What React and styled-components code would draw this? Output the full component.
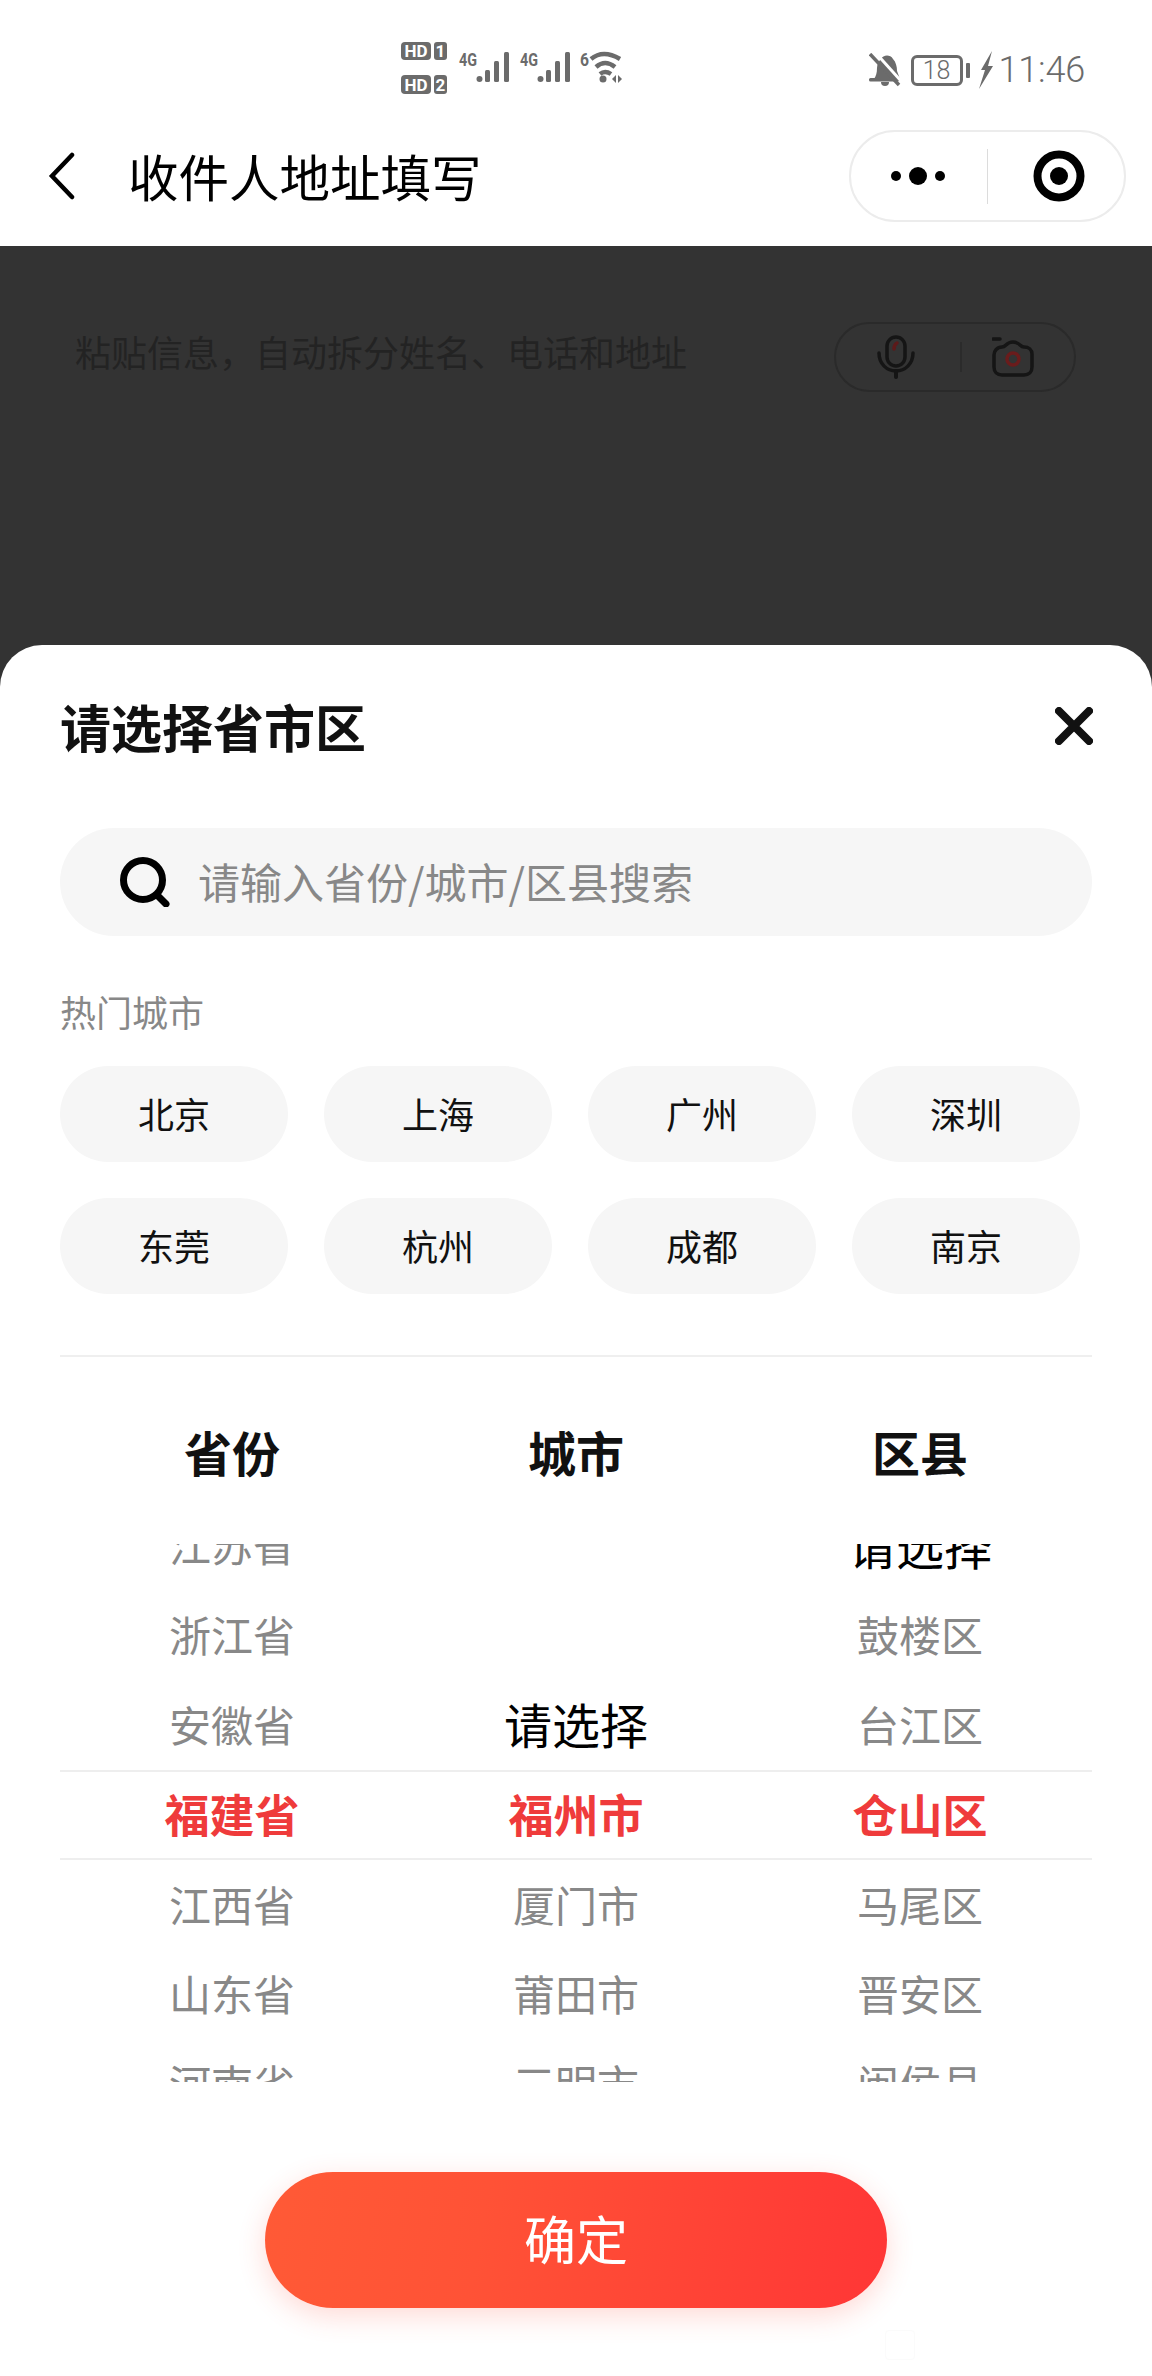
import React from "react";
import styled, { createGlobalStyle } from "styled-components";

const GlobalStyle = createGlobalStyle`
  html, body { margin: 0; padding: 0; background: #fff; }
  body { font-family: "Noto Sans CJK SC", "Liberation Sans", sans-serif; }
  * { box-sizing: border-box; }
`;

const Screen = styled.div`
  width: 1152px;
  height: 2376px;
  display: flex;
  flex-direction: column;
  overflow: hidden;
  background: #fff;
`;

/* status bar */
const StatusBar = styled.div`
  height: 106px;
  flex: none;
  display: flex;
  justify-content: space-between;
  align-items: flex-start;
  padding: 40px 67px 0 400px;
  color: #6b6b6b;
`;
const StatusRight = styled.div`
  display: flex;
  align-items: center;
  height: 40px;
  margin-top: 10px;
`;
const Battery = styled.div`
  width: 52px;
  height: 31px;
  margin-left: 10px;
  border: 3px solid #6b6b6b;
  border-radius: 6px;
  display: flex;
  align-items: center;
  justify-content: center;
  font: 300 25px/1 Roboto, sans-serif;
`;
const BatteryTip = styled.div`
  width: 4px;
  height: 15px;
  margin-left: 3px;
  background: #6b6b6b;
  border-radius: 1px;
`;
const Clock = styled.div`
  margin-left: 6px;
  font: 300 36px/1 Roboto, sans-serif;
  letter-spacing: -0.2px;
`;

/* navigation bar */
const NavBar = styled.div`
  height: 140px;
  flex: none;
  display: flex;
  align-items: center;
  padding: 0 26px 0 48px;
`;
const NavTitle = styled.div`
  margin-left: 53px;
  padding-bottom: 2px;
  font-size: 50.5px;
  line-height: 60px;
  color: #000;
`;
const Capsule = styled.div`
  margin-left: auto;
  width: 277px;
  height: 92px;
  border: 2px solid #ececec;
  border-radius: 46px;
  display: flex;
  align-items: center;
`;
const MoreCell = styled.div`
  width: 136px;
  display: flex;
  justify-content: center;
`;
const TargetCell = styled.div`
  flex: 1;
  display: flex;
  justify-content: center;
  padding-left: 6px;
`;
const CapsuleRule = styled.div`
  width: 1px;
  height: 55px;
  background: #dcdcdc;
`;

/* dimmed form behind the sheet */
const DimmedForm = styled.div`
  height: 399px;
  flex: none;
  background: #333;
  display: flex;
  justify-content: space-between;
  align-items: flex-start;
  padding: 76px 76px 0 75px;
`;
const PasteHint = styled.div`
  margin-top: 5px;
  font-size: 36px;
  line-height: 48px;
  color: #232323;
`;
const VoiceCapsule = styled.div`
  width: 242px;
  height: 70px;
  border: 2px solid #2a2a2a;
  border-radius: 35px;
  display: flex;
  align-items: center;
  padding-left: 41px;
`;
const VoiceRule = styled.div`
  width: 2px;
  height: 30px;
  margin: 0 30px 0 45px;
  background: #2b2b2b;
`;

/* bottom sheet, with the dimmed colour showing past its rounded corners */
const SheetBackdrop = styled.div`
  flex: 1;
  background: #333;
`;
const Sheet = styled.div`
  position: relative;
  height: 100%;
  background: #fff;
  border-radius: 42px 42px 0 0;
  padding: 0 60px;
`;
const SheetHeader = styled.div`
  height: 166px;
  padding-bottom: 4px;
  display: flex;
  align-items: center;
  justify-content: space-between;
`;
const SheetTitle = styled.div`
  font-size: 51px;
  font-weight: 700;
  line-height: 60px;
  color: #111;
`;
const CloseSlot = styled.div`
  display: flex;
  margin-right: -1px;
`;
const SearchBox = styled.div`
  margin-top: 17px;
  height: 108px;
  border-radius: 54px;
  background: #f6f6f6;
  display: flex;
  align-items: center;
  padding-left: 60px;
`;
const SearchHint = styled.div`
  margin-left: 28px;
  padding-bottom: 3px;
  font-size: 42px;
  line-height: 56px;
  color: #888;
`;
const HotLabel = styled.div`
  margin-top: 50px;
  font-size: 36px;
  line-height: 50px;
  color: #888;
`;
const HotGrid = styled.div`
  margin-top: 30px;
  display: grid;
  grid-template-columns: repeat(4, 228px);
  gap: 36px;
`;
const HotChip = styled.div`
  height: 96px;
  padding-bottom: 3px;
  border-radius: 48px;
  background: #f6f6f6;
  display: flex;
  align-items: center;
  justify-content: center;
  font-size: 36px;
  color: #111;
`;
const Divider = styled.div`
  margin-top: 61px;
  height: 2px;
  background: #efefef;
`;
const ColumnHeads = styled.div`
  margin-top: 64px;
  display: grid;
  grid-template-columns: repeat(3, 1fr);
`;
const ColumnHead = styled.div`
  text-align: center;
  font-size: 48px;
  font-weight: 700;
  line-height: 60px;
  color: #111;
`;
const Picker = styled.div`
  position: relative;
  margin-top: 63px;
  height: 538px;
  overflow: hidden;
  display: grid;
  grid-template-columns: repeat(3, 1fr);
`;
const PickerBand = styled.div`
  position: absolute;
  left: 0;
  right: 0;
  top: 226px;
  height: 90px;
  border-top: 2px solid #eee;
  border-bottom: 2px solid #eee;
`;
const PickerColumn = styled.div`
  margin-top: -43px;
`;
const PickerRow = styled.div`
  height: 89.8px;
  padding-bottom: 4px;
  display: flex;
  align-items: center;
  justify-content: center;
  font-size: ${(p) => (p.$tone === "muted" ? 42 : p.$tone === "active" ? 45 : 48)}px;
  font-weight: ${(p) => (p.$tone === "active" ? 700 : 400)};
  color: ${(p) => (p.$tone === "muted" ? "#888" : p.$tone === "active" ? "#ef3b3b" : "#000")};
`;
const ConfirmButton = styled.div`
  margin: 90px auto 0;
  width: 622px;
  height: 136px;
  padding-bottom: 6px;
  border-radius: 68px;
  background: linear-gradient(100deg, #ff5a36 0%, #ff5236 35%, #ff3636 100%);
  box-shadow: 0 8px 28px rgba(255, 70, 50, 0.2);
  display: flex;
  align-items: center;
  justify-content: center;
  font-size: 52px;
  color: #fff;
`;
const HomeGhost = styled.div`
  position: absolute;
  left: 885px;
  bottom: 16px;
  width: 30px;
  height: 30px;
  border: 1px solid #fbfbfb;
  border-radius: 4px;
`;

/* drawn icons */
const StatusGlyphs = () => (
  <svg width="226" height="56" viewBox="400 40 226 56" fill="#6b6b6b">
    <rect x="401" y="42" width="30" height="18" rx="4" />
    <rect x="434" y="42" width="13" height="18" rx="3" />
    <rect x="401" y="75" width="30" height="19" rx="4" />
    <rect x="434" y="75" width="13" height="19" rx="3" />
    <g fill="#fff" fontFamily="Roboto, sans-serif" fontWeight="700" fontSize="17" textAnchor="middle">
      <text x="416" y="57">HD</text>
      <text x="440.5" y="57">1</text>
      <text x="416" y="90.5">HD</text>
      <text x="440.5" y="90.5">2</text>
    </g>
    <g fontFamily="Roboto, sans-serif" fontWeight="700" fontSize="19">
      <text x="459" y="66" textLength="18" lengthAdjust="spacingAndGlyphs">4G</text>
      <text x="520" y="66" textLength="18" lengthAdjust="spacingAndGlyphs">4G</text>
      <text x="580" y="66" textLength="9" lengthAdjust="spacingAndGlyphs">6</text>
    </g>
    {[477, 538].map((x) => (
      <g key={x}>
        <circle cx={x + 2.5} cy="79" r="3" />
        <rect x={x + 8} y="70" width="5" height="12" rx="1.5" />
        <rect x={x + 17} y="61" width="5" height="21" rx="1.5" />
        <rect x={x + 27} y="52" width="5" height="30" rx="1.5" />
      </g>
    ))}
    <g fill="none" stroke="#6b6b6b" strokeWidth="4.5">
      <path d="M591 59 Q603 49 620 59" />
      <path d="M596 67 Q605 59 615 67" />
      <path d="M600 74 Q605 70 611 74" />
    </g>
    <circle cx="603" cy="79" r="3.5" />
    <path d="M612 79l4-4v8zM618 75l4 4-4 4z" />
  </svg>
);

const MutedBell = () => (
  <svg width="32" height="34" viewBox="0 0 32 34" fill="#6b6b6b" style={{ marginLeft: -2 }}>
    <path d="M5 26c2-3 3-6 3-11 0-4 2-7 4-9 2-4 9-5 12 0 3 3 4 8 4 12l3 8z" />
    <rect x="0" y="25" width="30" height="3.5" rx="1.5" />
    <path d="M12 29h8a4 4 0 0 1-8 0z" />
    <path d="M3 0l28 31" stroke="#fff" strokeWidth="3" transform="translate(2 -2)" />
    <path d="M1 1l29 31" stroke="#6b6b6b" strokeWidth="3.5" />
  </svg>
);

const Bolt = () => (
  <svg width="14" height="38" viewBox="0 0 14 38" fill="#6b6b6b" style={{ marginLeft: 9 }}>
    <path d="M13 0L2 19h4L0 38 14 15H9z" />
  </svg>
);

const BackChevron = () => (
  <svg width="27" height="48" viewBox="0 0 27 48" fill="none" stroke="#000" strokeWidth="4.5" strokeLinecap="round">
    <path d="M24 3L4 24l20 21" />
  </svg>
);

const MoreDots = () => (
  <svg width="60" height="18" viewBox="0 0 60 18" fill="#000">
    <circle cx="7" cy="9" r="5" />
    <circle cx="29" cy="9" r="9" />
    <circle cx="51" cy="9" r="5" />
  </svg>
);

const RecordTarget = () => (
  <svg width="52" height="52" viewBox="0 0 52 52">
    <circle cx="26" cy="26" r="21.5" fill="none" stroke="#000" strokeWidth="8" />
    <circle cx="26" cy="26" r="9" fill="#000" />
  </svg>
);

const MicIcon = () => (
  <svg width="38" height="44" viewBox="0 0 38 44" fill="none" stroke="#151515" strokeWidth="3.5" strokeLinecap="round">
    <rect x="10" y="2" width="18" height="29" rx="9" />
    <path d="M2 18c0 11 8 18 17 18s17-7 17-18" />
    <path d="M19 36v6" strokeWidth="4" />
    <path d="M17 14c0-3 1-5 3-6" stroke="#5c1a1a" />
  </svg>
);

const CameraIcon = () => (
  <svg width="42" height="40" viewBox="0 0 42 40" fill="none" stroke="#151515" strokeWidth="3.5" strokeLinecap="round">
    <path d="M1 2h7" />
    <path d="M10 10c2 0 3-1 4-2 2-2 3-3 7-3s5 1 7 3c1 1 2 2 4 2 5 0 8 3 8 7v13c0 5-3 8-8 8H10c-5 0-8-3-8-8V18c0-4 3-8 8-8z" />
    <circle cx="21" cy="22" r="6" stroke="#6a1c1c" strokeWidth="3.5" />
  </svg>
);

const CloseIcon = () => (
  <svg width="38" height="38" viewBox="0 0 38 38" fill="none" stroke="#111" strokeWidth="8" strokeLinecap="round">
    <path d="M4 4l30 30M34 4L4 34" />
  </svg>
);

const SearchIcon = () => (
  <svg width="50" height="50" viewBox="0 0 50 50" fill="none" stroke="#000" strokeWidth="7" strokeLinecap="round">
    <circle cx="23" cy="23" r="19.5" />
    <path d="M37 38l9 9" />
  </svg>
);

const hotCities = ["北京", "上海", "广州", "深圳", "东莞", "杭州", "成都", "南京"];

const columns = [
  { title: "省份", rows: ["江苏省", "浙江省", "安徽省", "福建省", "江西省", "山东省", "河南省"], prompt: -1 },
  { title: "城市", rows: ["", "", "请选择", "福州市", "厦门市", "莆田市", "三明市"], prompt: 2 },
  { title: "区县", rows: ["请选择", "鼓楼区", "台江区", "仓山区", "马尾区", "晋安区", "闽侯县"], prompt: 0 },
];

const ACTIVE_ROW = 3;

export default function App() {
  return (
    <Screen>
      <GlobalStyle />
      <StatusBar>
        <StatusGlyphs />
        <StatusRight>
          <MutedBell />
          <Battery>18</Battery>
          <BatteryTip />
          <Bolt />
          <Clock>11:46</Clock>
        </StatusRight>
      </StatusBar>

      <NavBar>
        <BackChevron />
        <NavTitle>收件人地址填写</NavTitle>
        <Capsule>
          <MoreCell>
            <MoreDots />
          </MoreCell>
          <CapsuleRule />
          <TargetCell>
            <RecordTarget />
          </TargetCell>
        </Capsule>
      </NavBar>

      <DimmedForm>
        <PasteHint>{"粘贴信息\uFF0C自动拆分姓名、电话和地址"}</PasteHint>
        <VoiceCapsule>
          <MicIcon />
          <VoiceRule />
          <CameraIcon />
        </VoiceCapsule>
      </DimmedForm>

      <SheetBackdrop>
        <Sheet>
          <SheetHeader>
            <SheetTitle>请选择省市区</SheetTitle>
            <CloseSlot>
              <CloseIcon />
            </CloseSlot>
          </SheetHeader>
          <SearchBox>
            <SearchIcon />
            <SearchHint>请输入省份/城市/区县搜索</SearchHint>
          </SearchBox>
          <HotLabel>热门城市</HotLabel>
          <HotGrid>
            {hotCities.map((city) => (
              <HotChip key={city}>{city}</HotChip>
            ))}
          </HotGrid>
          <Divider />
          <ColumnHeads>
            {columns.map((col) => (
              <ColumnHead key={col.title}>{col.title}</ColumnHead>
            ))}
          </ColumnHeads>
          <Picker>
            <PickerBand />
            {columns.map((col) => (
              <PickerColumn key={col.title}>
                {col.rows.map((row, i) => (
                  <PickerRow
                    key={i}
                    $tone={i === ACTIVE_ROW ? "active" : i === col.prompt ? "prompt" : "muted"}
                  >
                    {row}
                  </PickerRow>
                ))}
              </PickerColumn>
            ))}
          </Picker>
          <ConfirmButton>确定</ConfirmButton>
          <HomeGhost />
        </Sheet>
      </SheetBackdrop>
    </Screen>
  );
}
